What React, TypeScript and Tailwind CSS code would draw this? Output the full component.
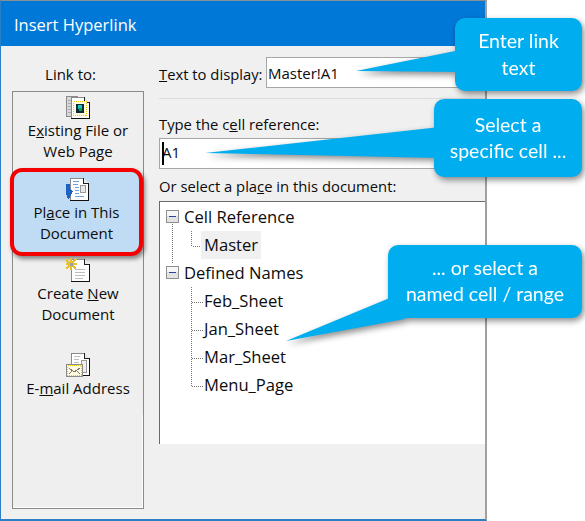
import React from "react";

const ui = "font-['Open_Sans','Noto_Sans',sans-serif]";

function Doc({ x = 7, y = 1, w = 16, h = 22 }: { x?: number; y?: number; w?: number; h?: number }) {
  const r = x + w;
  const b = y + h;
  return (
    <g>
      <path d={`M${x} ${y}H${r - 5}L${r} ${y + 5}V${b}H${x}Z`} fill="#fff" stroke="#8a8a8a" />
      <path d={`M${r - 5} ${y}V${y + 5}H${r}`} fill="#e8e8e8" stroke="#222" />
      <path d={`M${r} ${y + 5}V${b}H${x}`} fill="none" stroke="#111" />
    </g>
  );
}

function ExistingIcon() {
  return (
    <svg width="24" height="25" viewBox="0 0 24 25" shapeRendering="crispEdges">
      <path d="M0.5 1.5H11V21.5H0.5Z" fill="#d8d8d8" stroke="#8a8a8a" />
      <path d="M2 5H9M2 8H9M2 11H9M2 14H9M2 17H9" stroke="#aaa" />
      <Doc x={5} y={2} w={18} h={21} />
      <path d="M7.5 6.5H20.5V20.5H7.5Z" fill="#fffbe0" stroke="#e8c800" strokeDasharray="1 1" />
      <rect x="10" y="9" width="8" height="9" fill="#0a2a35" />
      <rect x="12" y="10" width="4" height="4" fill="#18c8c0" />
      <rect x="13" y="13" width="3" height="3" fill="#12a040" />
    </svg>
  );
}

function PlaceIcon() {
  return (
    <svg width="24" height="25" viewBox="0 0 24 25" shapeRendering="crispEdges">
      <Doc x={5} y={1} w={18} h={22} />
      <path d="M8 4H14M8 7H13M10 10H14M10 13H14M10 16H14M10 19H19" stroke="#6aa0e0" />
      <rect x="15.5" y="8.5" width="5" height="7" fill="#e8e8e8" stroke="#999" />
      <path d="M1 7H5V12L8 14L5 20L3 22L1 16Z" fill="#1f62c4" />
    </svg>
  );
}

function NewIcon() {
  return (
    <svg width="24" height="25" viewBox="0 0 24 25" shapeRendering="crispEdges">
      <Doc x={5} y={1} w={18} h={22} />
      <path d="M9 11H19M9 14H19M9 17H19M9 20H17" stroke="#bdbdbd" />
      <path d="M0 2L10 11M10 1L0 11M5 0V12M0 6H11" stroke="#e8c02c" strokeWidth="2" />
      <rect x="4" y="5" width="3" height="3" fill="#a0a0a0" />
    </svg>
  );
}

function MailIcon() {
  return (
    <svg width="24" height="25" viewBox="0 0 24 25" shapeRendering="crispEdges">
      <Doc x={5} y={0} w={18} h={22} />
      <path d="M8 3H14M8 6H13M8 9H13" stroke="#bdbdbd" />
      <rect x="15.5" y="7.5" width="5" height="12" fill="#eee" stroke="#999" />
      <rect x="0.5" y="11.5" width="16" height="12" fill="#fffbe0" stroke="#8a8a8a" />
      <path d="M1.5 12.5H15.5V22.5H1.5Z" fill="none" stroke="#e8c800" strokeDasharray="1 1" />
      <path d="M3 15L8 19L14 15M3 21L6 18M14 21L11 18" stroke="#777" fill="none" />
    </svg>
  );
}

function Minus() {
  return (
    <svg width="14" height="14" viewBox="0 0 14 14" shapeRendering="crispEdges" className="shrink-0">
      <rect x="0.5" y="0.5" width="12" height="12" fill="#e2e2e2" stroke="#8e8e8e" />
      <rect x="1" y="1" width="11" height="5" fill="#f6f6f6" />
      <rect x="3" y="6" width="7" height="1" fill="#2f3f9e" />
    </svg>
  );
}

function Item({ icon, lines, className }: { icon: React.ReactNode; lines: React.ReactNode[]; className: string }) {
  return (
    <div className={`flex flex-col items-center ${className}`}>
      {icon}
      <div className="text-center leading-[20.5px]">
        {lines.map((l, i) => (
          <div key={i}>{l}</div>
        ))}
      </div>
    </div>
  );
}

function TreeRow({ label, indent, selected }: { label: string; indent: boolean; selected?: boolean }) {
  return (
    <div className={`flex h-[28px] items-center ${indent ? "pl-[44px]" : "pl-[6px]"}`}>
      {indent ? (
        <span className={`-ml-[3px] px-[3px] leading-[28px] ${selected ? "bg-[#f0f0f0]" : ""}`}>{label}</span>
      ) : (
        <>
          <Minus />
          <span className="ml-[4px]">{label}</span>
        </>
      )}
    </div>
  );
}

export default function App() {
  return (
    <div className={`relative h-[521px] w-[585px] overflow-hidden bg-white text-[15px] text-[#0c0c0c] ${ui}`}>
      <div className="flex h-[521px] w-[487px] flex-col border-t-[1px] border-r-[2px] border-b-[2px] border-l-[1px] border-t-[#8d8d8d] border-r-[#a0a0a0] border-b-[#2b7fc4] border-l-[#2b7fc4] bg-[#f0f0f0]">
        <div className="flex h-[45px] shrink-0 items-center bg-[#0078d7] pt-[3px] pl-[13px] text-[16.5px] text-white">
          Insert Hyperlink
        </div>
        <div className="flex min-h-0 flex-1">
          <div className="flex w-[158px] shrink-0 flex-col pr-[15px] pl-[11px]">
            <div className="flex h-[45px] shrink-0 items-center justify-center pt-[12px] pr-[15px]">Link to:</div>
            <div className="flex h-[418px] flex-col border border-[#8a8a8a] bg-[#efefef]">
              <Item
                className="h-[76px] pt-[3px]"
                icon={<ExistingIcon />}
                lines={[<>E<u>x</u>isting File or</>, "Web Page"]}
              />
              <Item
                className="-ml-[3px] h-[88px] rounded-[12px] border-[4px] border-[#f50000] bg-[#bfdcf4] pt-[5px] shadow-[2px_3px_4px_rgba(0,0,0,0.45)]"
                icon={<PlaceIcon />}
                lines={[<>Pl<u>a</u>ce in This</>, "Document"]}
              />
              <Item
                className="h-[97px] pt-[2px]"
                icon={<NewIcon />}
                lines={[<>Create <u>N</u>ew</>, "Document"]}
              />
              <Item icon={<MailIcon />} lines={[<>E-<u>m</u>ail Address</>]} className="" />
              <div className="mt-[16px] min-h-0 flex-1 border-r border-b border-white" />
            </div>
          </div>
          <div className="flex min-w-0 flex-1 flex-col">
            <div className="flex h-[53px] shrink-0 items-end border-b border-[#dcdcdc] pb-[10px]">
              <span className="mb-[3px] w-[107px] shrink-0 text-[14.8px] whitespace-nowrap">
                <u>T</u>ext to display:
              </span>
              <div className="flex h-[31px] flex-1 items-center border border-[#a6a6a6] bg-white pt-[2px] pl-[1px]">Master!A1</div>
            </div>
            <div className="flex h-[39px] shrink-0 items-end pb-[3px] text-[14.8px]">
              Type the c<u>e</u>ll reference:
            </div>
            <div className="relative flex h-[31px] shrink-0 items-center border border-[#a6a6a6] bg-white pb-[2px] pl-[2px]">
              A1
              <span className="absolute top-[3px] left-[2px] h-[23px] w-[1.5px] bg-black" />
            </div>
            <div className="flex h-[32px] shrink-0 items-center pt-[2px] text-[14.8px]">
              Or select a pla<u>c</u>e in this document:
            </div>
            <div className="relative h-[243px] shrink-0 border-t border-l border-[#6a6a6a] bg-white pt-[1px] text-[16.6px]">
              <svg className="absolute top-0 left-0" width="60" height="190" viewBox="0 0 60 190" shapeRendering="crispEdges">
                <path
                  d="M12.5 22V62M31.5 29V44H44M31.5 85V184M31.5 100H44M31.5 128H44M31.5 156H44M31.5 184H44"
                  fill="none"
                  stroke="#777"
                  strokeDasharray="1 1"
                />
              </svg>
              <div className="relative">
                <TreeRow label="Cell Reference" indent={false} />
                <TreeRow label="Master" indent selected />
                <TreeRow label="Defined Names" indent={false} />
                <TreeRow label="Feb_Sheet" indent />
                <TreeRow label="Jan_Sheet" indent />
                <TreeRow label="Mar_Sheet" indent />
                <TreeRow label="Menu_Page" indent />
              </div>
            </div>
          </div>
        </div>
      </div>

      <div className="pointer-events-none absolute inset-0 font-['Lato',sans-serif] text-[19.5px] leading-[26.5px] text-white drop-shadow-[2px_3px_3px_rgba(0,0,0,0.45)]">
        <svg className="absolute top-0 left-0" width="585" height="521" viewBox="0 0 585 521">
          <path d="M356 71L460 50V72Z" fill="#00aef0" />
          <path d="M205 153L440 127V158Z" fill="#00aef0" />
          <path d="M286 341L392 297L405 319Z" fill="#00aef0" />
        </svg>
        <div className="absolute top-[18px] left-[455px] flex h-[73px] w-[127px] flex-col items-center justify-center rounded-[10px] bg-[#00aef0]">
          <div>Enter link</div>
          <div>text</div>
        </div>
        <div className="absolute top-[99px] left-[434px] flex h-[78px] w-[148px] flex-col items-center justify-center rounded-[10px] bg-[#00aef0]">
          <div>Select a</div>
          <div>specific cell ...</div>
        </div>
        <div className="absolute top-[245px] left-[388px] flex h-[73px] w-[194px] flex-col items-center justify-center rounded-[10px] bg-[#00aef0] pb-[1px]">
          <div>... or select a</div>
          <div>named cell / range</div>
        </div>
      </div>
    </div>
  );
}
